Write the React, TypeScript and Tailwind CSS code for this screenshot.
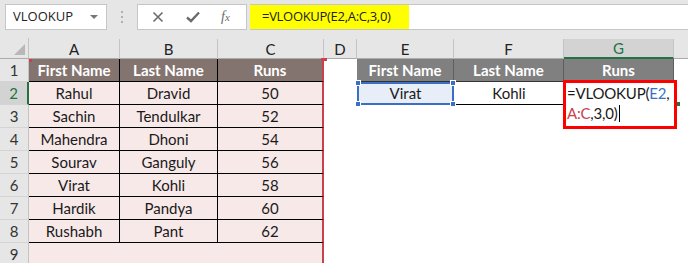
import React from 'react';

const cols = [
  { key: 'A', w: 91 },
  { key: 'B', w: 98 },
  { key: 'C', w: 106 },
  { key: 'D', w: 33 },
  { key: 'E', w: 97 },
  { key: 'F', w: 110 },
  { key: 'G', w: 110 },
  { key: '', w: 30 },
];

const players = [
  ['Rahul', 'Dravid', '50'],
  ['Sachin', 'Tendulkar', '52'],
  ['Mahendra', 'Dhoni', '54'],
  ['Sourav', 'Ganguly', '56'],
  ['Virat', 'Kohli', '58'],
  ['Hardik', 'Pandya', '60'],
  ['Rushabh', 'Pant', '62'],
];

const Handle = ({ pos }: { pos: string }) => (
  <span className={`absolute w-[6px] h-[6px] bg-[#3b6fc6] border border-white ${pos}`} />
);

function RowHeader({ n }: { n: number }) {
  const active = n === 2;
  return (
    <div
      className={`w-[29px] shrink-0 h-full flex items-center justify-center text-[15px] border-b border-[#d4d4d4] ${
        active ? 'bg-[#d3d3d3] text-[#217346] border-r-2 border-r-[#217346]' : 'bg-[#e6e6e6] text-[#333] border-r border-r-[#c4c4c4]'
      }`}
    >
      {n}
    </div>
  );
}

export default function App() {
  const rows = Array.from({ length: 9 }, (_, i) => i + 1);

  return (
    <div className="w-[688px] h-[263px] overflow-hidden bg-white font-['Lato',sans-serif] relative">
      {/* formula bar */}
      <div className="h-[38px] bg-[#e6e6e6] flex items-start pt-[4px] pl-[5px]">
        <div className="w-[102px] h-[26px] bg-white border border-[#c6c6c6] flex items-center justify-between pl-[7px] pr-[8px] text-[13px] text-[#222] font-['Open_Sans',sans-serif]">
          <span>VLOOKUP</span>
          <span className="w-0 h-0 border-l-[4px] border-r-[4px] border-t-[4px] border-l-transparent border-r-transparent border-t-[#777]" />
        </div>
        <div className="w-[30px] h-[26px] flex flex-col items-center justify-center gap-[3px]">
          <span className="w-[2px] h-[2px] bg-[#b0b0b0]" />
          <span className="w-[2px] h-[2px] bg-[#b0b0b0]" />
          <span className="w-[2px] h-[2px] bg-[#b0b0b0]" />
        </div>
        <div className="w-[110px] h-[26px] bg-white border border-[#c6c6c6] flex items-center text-[#6b6b6b]">
          <svg className="ml-[14px]" width="12" height="12" viewBox="0 0 12 12">
            <path d="M1.5 1.5 L10.5 10.5 M10.5 1.5 L1.5 10.5" stroke="#6b6b6b" strokeWidth="1.6" />
          </svg>
          <svg className="ml-[22px]" width="14" height="12" viewBox="0 0 14 12">
            <path d="M1 6.5 L5 10 L13 1.5" stroke="#6b6b6b" strokeWidth="2.4" fill="none" />
          </svg>
          <span className="ml-[21px] font-['Liberation_Serif',serif] italic text-[14px] leading-none">
            f<span className="text-[11px]">x</span>
          </span>
        </div>
        <div className="ml-[3px] flex-1 h-[26px] bg-white border-y border-[#c6c6c6] flex">
          <div className="w-[159px] h-full bg-[#ffff00] flex items-center pl-[12px] text-[13px] text-[#222] font-['Open_Sans',sans-serif] tracking-[-0.3px]">
            =VLOOKUP(E2,A:C,3,0)
          </div>
        </div>
      </div>

      {/* column headers */}
      <div className="h-[21px] flex bg-[#e6e6e6] border-b border-[#ababab]">
        <div className="w-[29px] shrink-0 h-full relative border-r border-[#c4c4c4]">
          <span className="absolute right-[3px] bottom-[3px] w-0 h-0 border-l-[11px] border-l-transparent [border-bottom:11px_solid_#b8b8b8]" />
        </div>
        {cols.map((c, i) => (
          <div
            key={i}
            style={{ width: c.w }}
            className={`shrink-0 h-full flex items-center justify-center text-[15px] border-r border-[#c4c4c4] mt-[1px] ${
              c.key === 'G' ? 'bg-[#d3d3d3] text-[#217346] border-b-2 border-b-[#217346]' : 'text-[#222]'
            }`}
          >
            {c.key}
          </div>
        ))}
      </div>

      {/* grid rows */}
      {rows.map((n) => {
        const p = n >= 2 && n <= 8 ? players[n - 2] : null;
        const hdr = n === 1;
        const leftCell = (text: string, w: number, last: boolean) => (
          <div
            style={{ width: w }}
            className={`shrink-0 h-full flex items-center justify-center text-[15px] ${
              hdr ? 'bg-[#837470] text-white font-bold' : 'bg-[#f8e9e9] text-[#1a1a1a]'
            } ${n <= 8 ? 'border-b border-b-black' : ''} ${
              last ? 'border-r-2 border-r-[#c9414b]' : n <= 8 ? 'border-r border-r-black' : ''
            }`}
          >
            {text}
          </div>
        );
        return (
          <div key={n} className="h-[23px] flex">
            <RowHeader n={n} />
            {leftCell(hdr ? 'First Name' : p ? p[0] : '', 91, false)}
            {leftCell(hdr ? 'Last Name' : p ? p[1] : '', 98, false)}
            {leftCell(hdr ? 'Runs' : p ? p[2] : '', 106, true)}
            <div className="w-[33px] shrink-0 h-full" />
            {hdr ? (
              <>
                <div className="w-[97px] shrink-0 h-full bg-[#808080] text-white font-bold text-[15px] flex items-center justify-center border-r border-[#5e5e5e] border-b border-b-[#333]">
                  First Name
                </div>
                <div className="w-[110px] shrink-0 h-full bg-[#808080] text-white font-bold text-[15px] flex items-center justify-center border-r border-[#5e5e5e] border-b border-b-[#333]">
                  Last Name
                </div>
                <div className="w-[110px] shrink-0 h-full bg-[#808080] text-white font-bold text-[15px] flex items-center justify-center border-r border-[#5e5e5e] border-b border-b-[#333]">
                  Runs
                </div>
              </>
            ) : n === 2 ? (
              <>
                <div className="w-[97px] shrink-0 h-full bg-[#e8eef8] text-[#1a1a1a] text-[15px] flex items-center justify-center relative border-2 border-[#3b6fc6]">
                  Virat
                  <Handle pos="-left-[4px] -top-[4px]" />
                  <Handle pos="-right-[4px] -top-[4px]" />
                  <Handle pos="-left-[4px] -bottom-[4px]" />
                  <Handle pos="-right-[4px] -bottom-[4px]" />
                </div>
                <div className="w-[110px] shrink-0 h-full text-[#1a1a1a] text-[15px] flex items-center justify-center border-b border-black">
                  Kohli
                </div>
                <div className="w-[110px] shrink-0 h-full" />
              </>
            ) : null}
          </div>
        );
      })}

      {/* A:C reference corner marks */}
      <span className="absolute left-[29px] top-[59px] w-[3px] h-[3px] bg-[#c9414b]" />
      <span className="absolute left-[321px] top-[58px] w-[6px] h-[3px] bg-[#c9414b]" />

      {/* G2 in-cell edit box */}
      <div className="absolute left-[563px] top-[80px] w-[114px] h-[49px] border-[3px] border-[#ff0000] bg-white pl-[1px] text-[15px] leading-[20px] text-[#1a1a1a] whitespace-nowrap tracking-[-0.2px]">
        <div>
          =VLOOKUP(<span className="text-[#3b6fc6]">E2</span>,
        </div>
        <div className="flex items-center">
          <span className="text-[#c9414b]">A:C</span>,3,0)
          <span className="inline-block w-[1px] h-[17px] bg-black ml-[1px]" />
        </div>
      </div>
      <span className="absolute left-[677px] top-[102px] w-[3px] h-[4px] bg-[#217346]" />
    </div>
  );
}
